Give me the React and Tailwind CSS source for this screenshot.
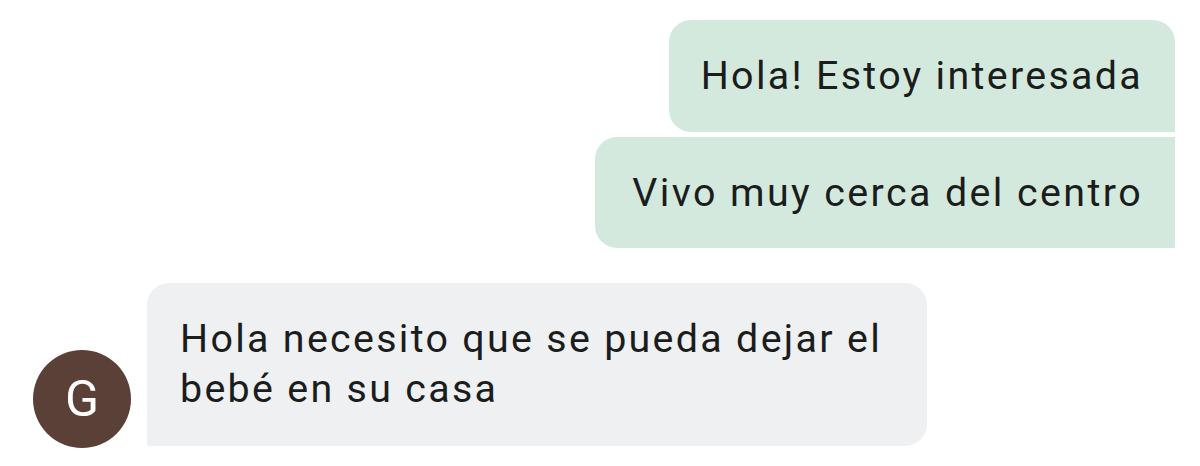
const outgoing = ['Hola! Estoy interesada', 'Vivo muy cerca del centro'];

const App = () => {
    return (
        <div className="w-[1200px] h-[466px] bg-white overflow-hidden font-['Roboto',_'Noto_Sans',_sans-serif] text-[#1b1d1c]">
            <div className="flex flex-col items-end gap-[5px] pt-[20px] pr-[25px]">
                <div className="bg-[#d4e9dd] rounded-[22px] rounded-br-none h-[112px] px-[32px] flex items-center text-[39.4px] tracking-[2.3px]">
                    {outgoing[0]}
                </div>
                <div className="bg-[#d4e9dd] rounded-l-[22px] h-[111px] pl-[37px] pr-[32px] flex items-center text-[39.4px] tracking-[2.4px]">
                    {outgoing[1]}
                </div>
            </div>
            <div className="flex items-end gap-[16px] pl-[33px] mt-[35px]">
                <div className="w-[98px] h-[98px] shrink-0 rounded-full bg-[#5b4038] text-white flex items-center justify-center text-[50px] mb-[-2px]">
                    G
                </div>
                <div className="w-[780px] bg-[#eff0f2] rounded-[22px] rounded-bl-none px-[33px] pt-[31px] pb-[32px] text-[39.4px] leading-[50px] tracking-[2.3px]">
                    Hola necesito que se pueda dejar el bebé en su casa
                </div>
            </div>
        </div>
    );
};

export default App;
